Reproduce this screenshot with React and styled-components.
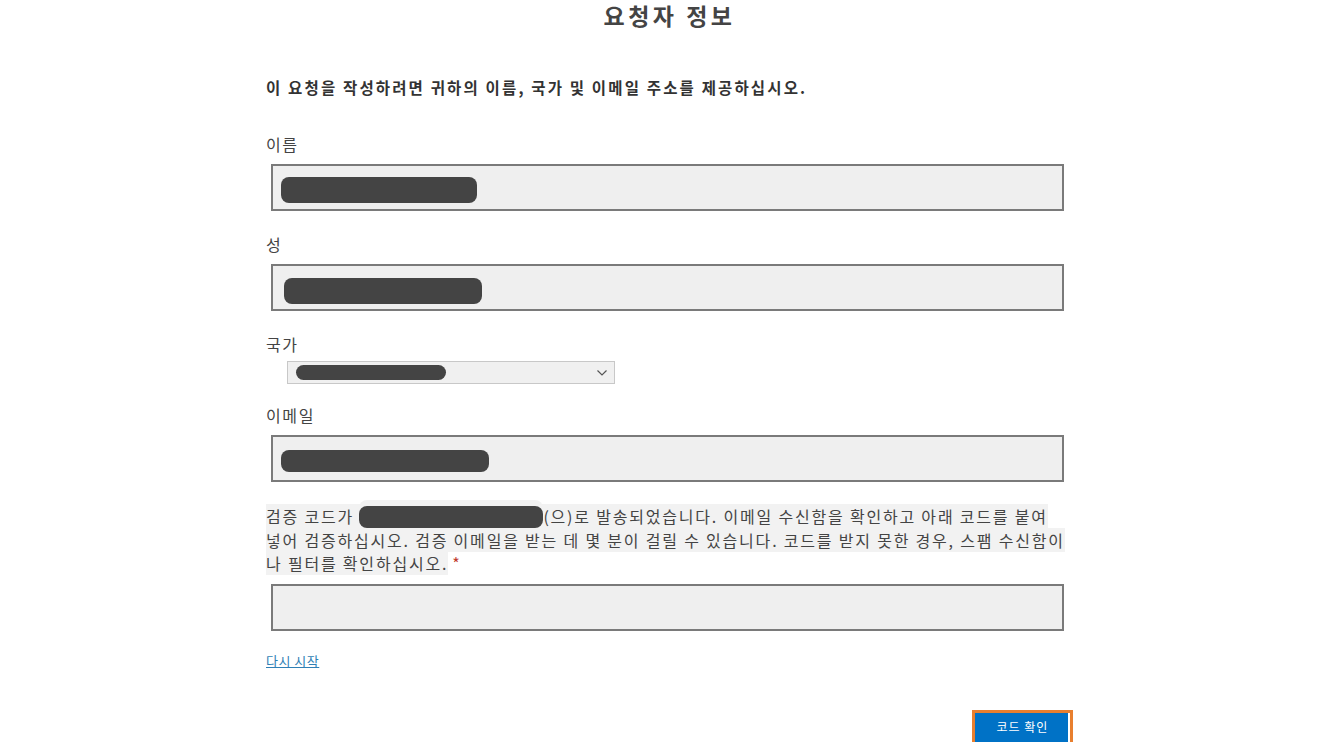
import styled, { createGlobalStyle } from 'styled-components';

const GlobalStyle = createGlobalStyle`
  html, body {
    margin: 0;
    padding: 0;
    background: #ffffff;
  }
  body {
    font-family: 'Noto Sans CJK KR', 'Noto Sans', sans-serif;
    color: #333333;
  }
`;

const Page = styled.div`
  width: 812px;
  margin: 0 auto;
  display: flex;
  flex-direction: column;
`;

const Title = styled.h1`
  margin: 0;
  padding: 2px 5px 0 0;
  text-align: center;
  font-size: 23px;
  line-height: 26px;
  font-weight: 700;
  letter-spacing: 3.5px;
  color: #444444;
`;

const Intro = styled.p`
  margin: 47px 0 0;
  font-size: 15.5px;
  line-height: 24px;
  font-weight: 700;
  letter-spacing: 2.15px;
  color: #333333;
`;

const Field = styled.div`
  display: flex;
  flex-direction: column;
  margin-top: ${(p) => p.$top || 21}px;
`;

const Label = styled.label`
  font-size: 16px;
  line-height: 24px;
  letter-spacing: 1.6px;
  color: #444444;
`;

const InputBox = styled.div`
  margin: ${(p) => p.$mt || 8}px 0 0 5px;
  width: 793px;
  height: 47px;
  box-sizing: border-box;
  border: 2px solid #7a7a7a;
  background: #efefef;
  display: flex;
  align-items: center;
  padding: 0 ${(p) => p.$pad || 8}px;
`;

const Redact = styled.span`
  display: inline-block;
  width: ${(p) => p.$w}px;
  height: ${(p) => p.$h || 26}px;
  border-radius: 8px;
  background: #444444;
  margin-top: ${(p) => p.$dy || 0}px;
`;

const Select = styled.div`
  margin: 5px 0 0 21px;
  width: 328px;
  height: 23px;
  box-sizing: border-box;
  border: 1px solid #c8c8c8;
  background: #f0f0f0;
  display: flex;
  align-items: center;
  justify-content: space-between;
  padding: 0 6px 0 8px;
`;

const Chevron = () => (
  <svg width="12" height="8" viewBox="0 0 12 8" fill="none">
    <path d="M1.5 1.5 L6 6 L10.5 1.5" stroke="#555" strokeWidth="1.2" />
  </svg>
);

const Notice = styled.p`
  margin: 23px 0 0;
  font-size: 16px;
  line-height: 23.5px;
  letter-spacing: 1.8px;
  color: #444444;
  white-space: nowrap;
`;

const Shade = styled.span`
  background: #f2f2f2;
`;

const InlineRedact = styled.span`
  display: inline-block;
  width: 184px;
  height: 22px;
  border-radius: 8px;
  background: #444444;
  vertical-align: -5px;
  box-shadow: 0 -6px 0 0 #f2f2f2;
`;

const Star = styled.span`
  color: #c0392b;
  margin-left: 4px;
`;

const Restart = styled.a`
  margin-top: 20px;
  font-size: 13px;
  line-height: 20px;
  letter-spacing: 0.5px;
  color: #2f7fb5;
  text-decoration: underline;
  align-self: flex-start;
  cursor: pointer;
`;

const Actions = styled.div`
  display: flex;
  justify-content: flex-end;
  margin-top: 39px;
  padding-right: 5px;
`;

const VerifyButton = styled.button`
  width: 101px;
  height: 36px;
  border: 3px solid #e87f2f;
  background: #0072c6;
  box-shadow: inset -2px 0 0 #ffffff;
  color: #ffffff;
  font-family: inherit;
  font-size: 12px;
  letter-spacing: 1px;
  padding: 0 0 3px;
`;

export default function App() {
  return (
    <>
      <GlobalStyle />
      <Page>
        <Title>요청자 정보</Title>
        <Intro>이 요청을 작성하려면 귀하의 이름, 국가 및 이메일 주소를 제공하십시오.</Intro>

        <Field $top={33}>
          <Label>이름</Label>
          <InputBox>
            <Redact $w={196} $dy={4} />
          </InputBox>
        </Field>

        <Field>
          <Label>성</Label>
          <InputBox $pad={11}>
            <Redact $w={198} $dy={6} />
          </InputBox>
        </Field>

        <Field>
          <Label>국가</Label>
          <Select>
            <Redact $w={150} $h={15} />
            <Chevron />
          </Select>
        </Field>

        <Field $top={19}>
          <Label>이메일</Label>
          <InputBox>
            <Redact $w={208} $h={22} $dy={4} />
          </InputBox>
        </Field>

        <Notice>
          <Shade>
            검증 코드가 <InlineRedact />(으)로 발송되었습니다. 이메일 수신함을 확인하고 아래 코드를 붙여
          </Shade>
          <br />
          <Shade>
            넣어 검증하십시오. 검증 이메일을 받는 데 몇 분이 걸릴 수 있습니다. 코드를 받지 못한 경우, 스팸 수신함이
          </Shade>
          <br />
          <Shade>나 필터를 확인하십시오.</Shade>
          <Star>*</Star>
        </Notice>

        <InputBox />

        <Restart>다시 시작</Restart>

        <Actions>
          <VerifyButton>코드 확인</VerifyButton>
        </Actions>
      </Page>
    </>
  );
}
